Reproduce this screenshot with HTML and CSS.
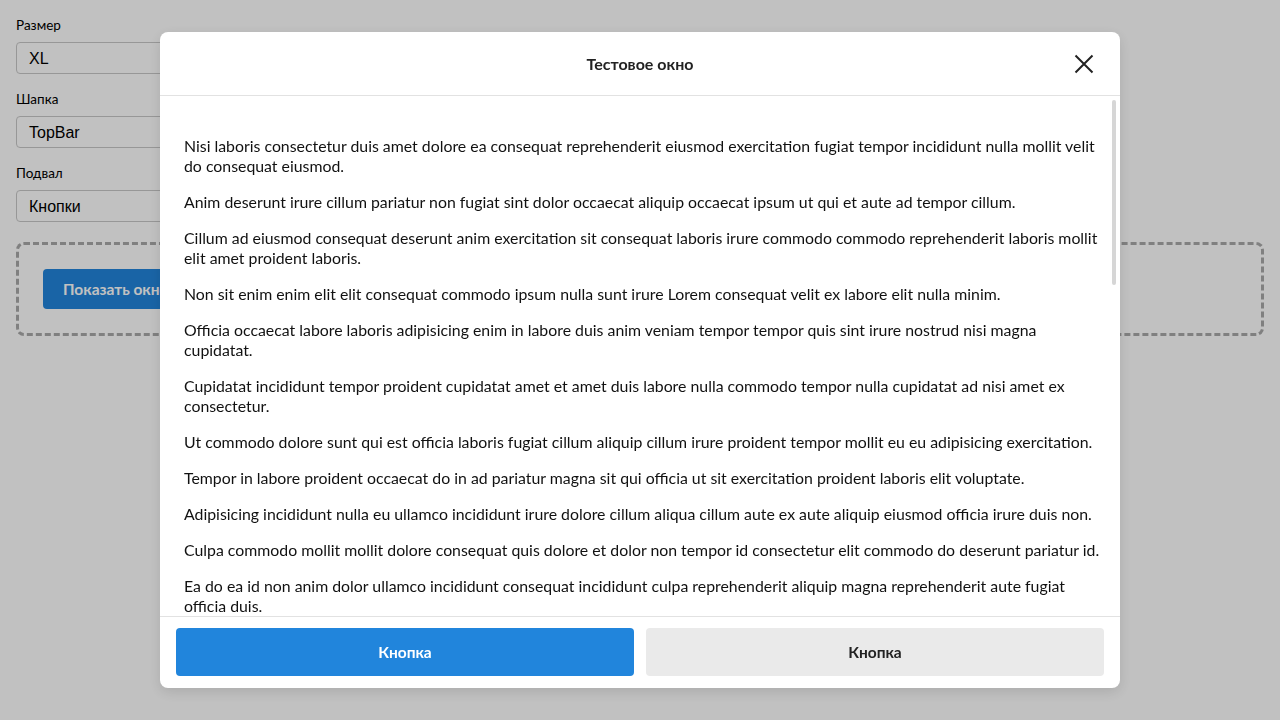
FILE: index.html
```html
<!DOCTYPE html>
<html lang="ru">
<head>
<meta charset="utf-8">
<title>Тестовое окно</title>
<link rel="stylesheet" href="styles.css">
</head>
<body>
<div class="page">
  <div class="field">
    <label class="field-label">Размер</label>
    <div class="select">XL</div>
  </div>
  <div class="field">
    <label class="field-label">Шапка</label>
    <div class="select">TopBar</div>
  </div>
  <div class="field">
    <label class="field-label">Подвал</label>
    <div class="select">Кнопки</div>
  </div>
  <div class="demo-box">
    <button class="show-btn">Показать окно</button>
  </div>
</div>

<div class="overlay">
  <div class="modal">
    <div class="modal-header">
      <div class="modal-title">Тестовое окно</div>
      <button class="modal-close" aria-label="Закрыть">
        <svg width="24" height="24" viewBox="0 0 24 24"><path d="M3.5 3.5 L20.5 20.5 M20.5 3.5 L3.5 20.5" stroke="#222" stroke-width="2" fill="none"/></svg>
      </button>
    </div>
    <div class="modal-scroll">
      <div class="modal-body">
        <p>Nisi laboris consectetur duis amet dolore ea consequat reprehenderit eiusmod exercitation fugiat tempor incididunt nulla mollit velit do consequat eiusmod.</p>
        <p>Anim deserunt irure cillum pariatur non fugiat sint dolor occaecat aliquip occaecat ipsum ut qui et aute ad tempor cillum.</p>
        <p>Cillum ad eiusmod consequat deserunt anim exercitation sit consequat laboris irure commodo commodo reprehenderit laboris mollit elit amet proident laboris.</p>
        <p>Non sit enim enim elit elit consequat commodo ipsum nulla sunt irure Lorem consequat velit ex labore elit nulla minim.</p>
        <p>Officia occaecat labore laboris adipisicing enim in labore duis anim veniam tempor tempor quis sint irure nostrud nisi magna cupidatat.</p>
        <p>Cupidatat incididunt tempor proident cupidatat amet et amet duis labore nulla commodo tempor nulla cupidatat ad nisi amet ex consectetur.</p>
        <p>Ut commodo dolore sunt qui est officia laboris fugiat cillum aliquip cillum irure proident tempor mollit eu eu adipisicing exercitation.</p>
        <p>Tempor in labore proident occaecat do in ad pariatur magna sit qui officia ut sit exercitation proident laboris elit voluptate.</p>
        <p>Adipisicing incididunt nulla eu ullamco incididunt irure dolore cillum aliqua cillum aute ex aute aliquip eiusmod officia irure duis non.</p>
        <p>Culpa commodo mollit mollit dolore consequat quis dolore et dolor non tempor id consectetur elit commodo do deserunt pariatur id.</p>
        <p>Ea do ea id non anim dolor ullamco incididunt consequat incididunt culpa reprehenderit aliquip magna reprehenderit aute fugiat officia duis.</p>
        <p>Velit aliqua occaecat laborum ea ipsum nostrud amet esse elit irure exercitation enim aute eu consequat pariatur.</p>
        <p>Laborum magna ad nulla est id reprehenderit pariatur velit eiusmod deserunt anim nostrud dolor proident voluptate.</p>
        <p>Esse in minim reprehenderit aute ullamco aliqua duis sunt non dolore ex anim consequat nisi irure amet laboris.</p>
        <p>Dolor proident sint dolor irure incididunt exercitation cillum anim nisi ut labore esse reprehenderit sunt.</p>
        <p>Qui officia cupidatat sit fugiat nostrud nulla magna elit ex ad consequat nostrud eu adipisicing minim.</p>
        <p>Magna consequat commodo cillum culpa laborum dolor in esse laboris fugiat nisi voluptate amet velit sint.</p>
        <p>Irure excepteur eu fugiat sunt deserunt occaecat velit officia elit ipsum sit dolore labore incididunt.</p>
        <p>Lorem dolor ad laboris exercitation nisi velit consequat ipsum in veniam eiusmod ex culpa aliqua.</p>
        <p>Id consectetur sint consequat ullamco culpa sunt ut ad eu proident enim laborum cillum dolore.</p>
        <p>Aliqua pariatur et anim ad ex nulla do amet consectetur occaecat ea mollit dolor irure.</p>
        <p>Sit tempor ea dolore exercitation sint sunt adipisicing voluptate in aliquip nulla ullamco minim.</p>
        <p>Eu amet aliqua nostrud id in excepteur adipisicing non aute est labore irure mollit sunt.</p>
        <p>Deserunt nisi officia aliquip do cupidatat fugiat commodo reprehenderit sint velit incididunt.</p>
        <p>Nostrud qui aute sit veniam cillum eiusmod quis laborum magna fugiat exercitation ipsum.</p>
        <p>Pariatur aliqua occaecat ullamco enim quis ea labore eiusmod mollit sint qui consequat.</p>
        <p>Consequat veniam enim occaecat nulla duis eu qui ad aliquip et esse anim.</p>
        <p>Fugiat esse laboris est sunt enim commodo incididunt sit aliqua velit cupidatat.</p>
      </div>
      <div class="scroll-thumb"></div>
    </div>
    <div class="modal-footer">
      <button class="btn btn-primary">Кнопка</button>
      <button class="btn btn-secondary">Кнопка</button>
    </div>
  </div>
</div>
</body>
</html>
```

FILE: styles.css
```css
* { box-sizing: border-box; }

html, body {
  margin: 0;
  height: 100%;
}

body {
  background: #fff;
  font-family: "Lato", "Noto Sans", sans-serif;
  color: #111;
  overflow: hidden;
}

.page {
  padding: 16px;
}

.field {
  display: flex;
  flex-direction: column;
  margin-bottom: 16px;
}

.field-label {
  font-size: 13.5px;
  line-height: 18px;
  color: #000;
  margin-bottom: 8px;
}

.select {
  width: 300px;
  height: 32px;
  border: 1px solid #c8c8c8;
  border-radius: 4px;
  padding: 1px 12px 0;
  display: flex;
  align-items: center;
  font-family: "Liberation Sans", Arial, sans-serif;
  font-size: 16px;
  color: #000;
}

.demo-box {
  margin-top: 20px;
  border: 3px dashed #aaa;
  border-radius: 8px;
  padding: 24px;
}

.show-btn {
  height: 40px;
  padding: 0 20px;
  border: 0;
  border-radius: 4px;
  background: #2285dc;
  color: #fff;
  font-family: "Lato", sans-serif;
  font-weight: 700;
  font-size: 15.5px;
}

.overlay {
  position: fixed;
  inset: 0;
  background: rgba(0, 0, 0, 0.245);
  display: flex;
  align-items: center;
  justify-content: center;
}

.modal {
  width: 960px;
  height: calc(100vh - 64px);
  background: #fff;
  border-radius: 8px;
  box-shadow: 0 4px 14px rgba(0, 0, 0, 0.12);
  display: flex;
  flex-direction: column;
  overflow: hidden;
}

.modal-header {
  flex: none;
  height: 64px;
  border-bottom: 1px solid #e2e2e2;
  display: flex;
  align-items: center;
  justify-content: center;
  position: relative;
}

.modal-title {
  font-weight: 700;
  font-size: 16px;
  color: #222;
}

.modal-close {
  position: absolute;
  right: 24px;
  top: 20px;
  width: 24px;
  height: 24px;
  padding: 0;
  border: 0;
  background: none;
  display: flex;
}

.modal-scroll {
  flex: 1;
  min-height: 0;
  position: relative;
  overflow: hidden;
}

.modal-body {
  padding: 24px 20px 24px 24px;
  font-size: 15.85px;
  line-height: 20px;
  color: #111;
}

.modal-body p {
  margin: 16px 0;
}

.scroll-thumb {
  position: absolute;
  top: 4px;
  right: 4px;
  width: 4px;
  height: 185px;
  border-radius: 2px;
  background: #d6d6d6;
}

.modal-footer {
  flex: none;
  border-top: 1px solid #e2e2e2;
  padding: 11px 16px 12px;
  display: flex;
  gap: 12px;
}

.btn {
  flex: 1;
  height: 48px;
  border: 0;
  border-radius: 4px;
  font-family: "Lato", sans-serif;
  font-weight: 700;
  font-size: 15.5px;
}

.btn-primary {
  background: #2185dc;
  color: #fff;
}

.btn-secondary {
  background: #eaeaea;
  color: #222;
}
```
